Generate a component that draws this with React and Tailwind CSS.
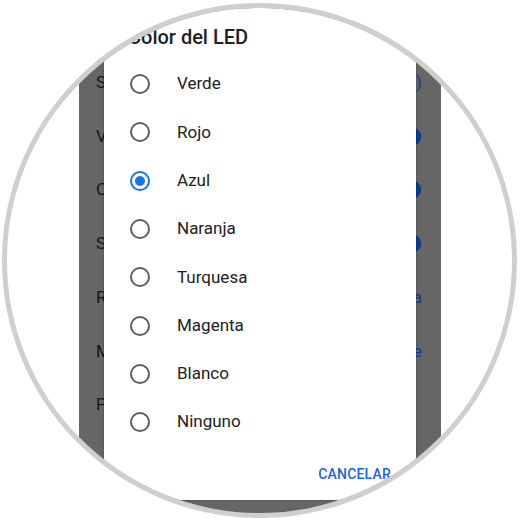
import React from "react";

const settings = [
  { left: "Sonido", right: "text", value: "(Predeterminado)" },
  { left: "Vibrar", right: "toggle" },
  { left: "Contenido", right: "toggle" },
  { left: "Sobrescribir", right: "toggle" },
  { left: "Repetir", right: "text", value: "Nunca" },
  { left: "Mostrar", right: "text", value: "Siempre" },
  { left: "Prioridad", right: "none" },
];

const options = ["Verde", "Rojo", "Azul", "Naranja", "Turquesa", "Magenta", "Blanco", "Ninguno"];

function Radio({ checked }) {
  return checked ? (
    <span className="w-[20px] h-[20px] rounded-full border-2 border-[#1a73e8] flex items-center justify-center shrink-0">
      <span className="w-[10px] h-[10px] rounded-full bg-[#1a73e8]" />
    </span>
  ) : (
    <span className="w-[20px] h-[20px] rounded-full border-2 border-[#5f5f5f] shrink-0" />
  );
}

export default function App() {
  return (
    <div className="w-[520px] h-[520px] bg-white pl-[2px] pt-[3px] font-['Roboto',sans-serif]">
      <div className="w-[515px] h-[515px] rounded-full border-[5px] border-[#cfcfcf] overflow-hidden bg-white pl-[72px]">
        <div className="relative w-[362px] h-full bg-[#666666]">
          {/* dimmed settings list */}
          <div className="flex flex-col pt-[48px] pl-[17px] pr-[19px]">
            {settings.map((s, i) => (
              <div key={i} className="h-[53.7px] flex items-center justify-between text-[17px] text-[#141414]">
                <span>{s.left}</span>
                {s.right === "text" && <span className="text-[#0c3e86]">{s.value}</span>}
                {s.right === "toggle" && (
                  <span className="relative w-[36px] h-[14px] rounded-full bg-[#0a2a5a] mr-[1px]">
                    <span className="absolute right-0 top-[-3px] w-[19px] h-[19px] rounded-full bg-[#0c3e86]" />
                  </span>
                )}
              </div>
            ))}
          </div>

          {/* dialog */}
          <div className="absolute left-[25px] top-0 w-[312px] h-[492px] bg-white shadow-[0_0_2px_rgba(0,0,0,0.35)] flex flex-col">
            <div className="pt-[17px] pl-[24px] text-[20px] leading-[24px] font-medium text-[#212121]">
              Color del LED
            </div>
            <div className="mt-[11px] flex flex-col">
              {options.map((o) => (
                <div key={o} className="h-[48.3px] flex items-center pl-[26px] gap-[27px]">
                  <Radio checked={o === "Azul"} />
                  <span className="text-[17px] text-[#212121]">{o}</span>
                </div>
              ))}
            </div>
            <div className="flex justify-end pr-[25px] mt-[10px] h-[36px] items-center">
              <span className="text-[14px] font-medium text-[#1a66e0] tracking-[0.2px]">CANCELAR</span>
            </div>
          </div>
        </div>
      </div>
    </div>
  );
}
